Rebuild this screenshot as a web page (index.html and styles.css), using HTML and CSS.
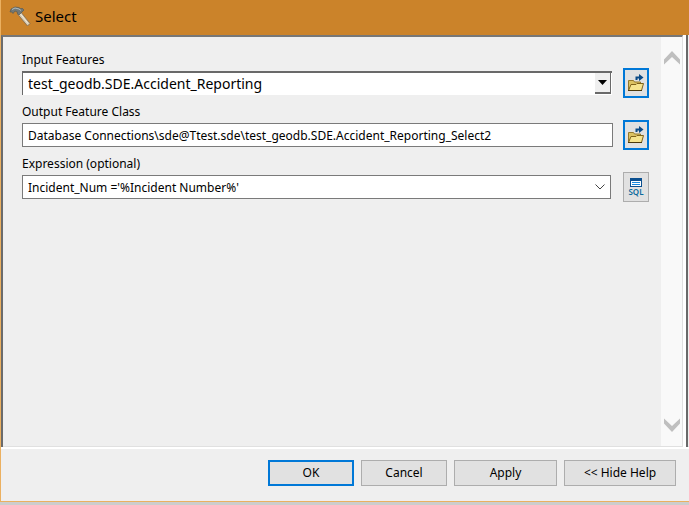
FILE: index.html
```html
<!DOCTYPE html>
<html lang="en">
<head>
<meta charset="utf-8">
<title>Select</title>
<link rel="stylesheet" href="styles.css">
</head>
<body>
<svg class="defs" aria-hidden="true">
  <symbol id="folder" viewBox="0 0 18 18">
    <path d="M1.500 16V6.500h5l1 1.500h6v3" fill="#dcc262" stroke="#94782c"/>
    <path d="M1.500 16.500L4 10.500h5l1-1h6.500l-2 7z" fill="#f6e48e" stroke="#80621a"/>
    <path d="M1 16.500h14" stroke="#4d3a0c"/>
    <path d="M9.500 6V3.500H13" fill="none" stroke="#0b4a86" stroke-width="2"/>
    <path d="M12 0l4.500 3.500L12 7z" fill="#0b4a86"/>
  </symbol>
  <symbol id="scroll-chevron" viewBox="0 0 16 14">
    <path d="M0 8.500L8 0l8 8.500v5L8 6l-8 7.500z" fill="#bfbfbf"/>
  </symbol>
</svg>
<main class="window">
  <header class="titlebar">
    <svg class="hammer" viewBox="0 0 22 22" aria-hidden="true">
      <path d="M8.500 9l3-2.500L21 18.500 18.500 21z" fill="#d6cab2" stroke="#80684c" stroke-width=".8"/>
      <path d="M11.500 9l7.500 9.500" stroke="#f4ecdc"/>
      <path d="M1 7l1-3 4-2 4 .5L12 4l1-1 2 2-5 5-2-2 .5-1L6 6 4 8.500 3 7z" fill="#727876" stroke="#585c58" stroke-width=".7"/>
      <path d="M3 4.500L6 3l4 1 2 1.500" fill="none" stroke="#b0bcc0"/>
    </svg>
    <h1>Select</h1>
  </header>
  <div class="workspace">
    <form class="panel" id="tool">
      <div class="field">
        <label for="features">Input Features</label>
        <div class="control classic">
          <select id="features"><option>test_geodb.SDE.Accident_Reporting</option></select>
          <span class="drop" aria-hidden="true"><svg viewBox="0 0 9 5"><path d="M0 0h9L4.500 5z"/></svg></span>
        </div>
        <button class="tool browse" type="button" aria-label="Browse input"><svg><use href="#folder"/></svg></button>
      </div>
      <div class="field">
        <label for="output">Output Feature Class</label>
        <div class="control output"><input id="output" type="text" value="Database Connections\sde@Ttest.sde\test_geodb.SDE.Accident_Reporting_Select2"></div>
        <button class="tool browse" type="button" aria-label="Browse output"><svg><use href="#folder"/></svg></button>
      </div>
      <div class="field">
        <label for="expression">Expression (optional)</label>
        <div class="control">
          <input id="expression" type="text" value="Incident_Num ='%Incident Number%'">
          <button class="chevron" type="button" aria-label="Show expressions"><svg viewBox="0 0 10 6"><path d="M.5.5L5 5 9.500.5" fill="none" stroke="#444"/></svg></button>
        </div>
        <button class="tool" type="button" aria-label="Query builder">
          <span class="sql"><svg viewBox="0 0 12 9"><path d="M0 0h12v9H0z" fill="#0b4f8f"/><path d="M1 3h10v5H1z" fill="#fff"/><path d="M2 4.500h8M2 6.500h8" stroke="#1689e0"/></svg><span>SQL</span></span>
        </button>
      </div>
    </form>
    <div class="scrollbar">
      <button type="button" aria-label="Scroll up"><svg><use href="#scroll-chevron"/></svg></button>
      <button type="button" class="down" aria-label="Scroll down"><svg><use href="#scroll-chevron"/></svg></button>
    </div>
    <aside class="help"></aside>
  </div>
  <footer class="actions">
    <button class="primary" form="tool" type="button">OK</button>
    <button type="button">Cancel</button>
    <button class="apply" type="button">Apply</button>
    <button class="hide" type="button">&lt;&lt; Hide Help</button>
  </footer>
</main>
</body>
</html>
```
FILE: styles.css
```css
* { box-sizing: border-box; }
body {
  margin: 0;
  background: #cdcdcd;
  color: #000;
  font: 12px/16px "Noto Sans", sans-serif;
}
button, input, select { font: inherit; color: inherit; margin: 0; }
button { padding: 0; background: #e1e1e1; border: 1px solid #adadad; }
svg { display: block; }
.defs { display: none; }
.window {
  display: flex;
  flex-direction: column;
  height: calc(100vh - 3px);
  background: #efefef;
  border: solid #ebb060;
  border-width: 0 0 1px 1px;
}
.titlebar {
  display: flex;
  align-items: center;
  gap: 4px;
  height: 35px;
  padding: 0 8px 3px;
  background: #cb832a;
}
.hammer { width: 22px; height: 22px; }
.titlebar h1 { margin: 0; font-size: 15px; line-height: 20px; font-weight: 400; }
.workspace {
  flex: 1;
  display: flex;
  border-bottom: 2px solid #fff;
  box-shadow: inset 0 -1px #e0e0e0;
}
.panel {
  flex: 1;
  min-width: 0;
  padding: 15px 12px 0 19px;
  border: solid #6b6b6b;
  border-width: 2px 0 0 2px;
  border-top-color: #777;
}
.field {
  display: grid;
  grid-template-columns: 1fr 26px;
  column-gap: 10px;
  margin-bottom: 6px;
}
.field label { grid-column: 1 / -1; justify-self: start; }
.control {
  position: relative;
  align-self: center;
  height: 24px;
  margin-right: 2px;
  background: #fff;
  border: 1px solid #7a7a7a;
}
.control.output { margin-right: 0; }
.control input, .control select {
  display: block;
  width: 100%;
  height: 100%;
  padding: 0 20px 0 5px;
  border: 0;
  background: none;
  appearance: none;
  outline: 0;
}
.control.output input { padding-right: 5px; }
.control.classic {
  border: solid #696969;
  border-width: 2px 0 0 1px;
  margin-right: 1px;
}
.classic select { font-size: 14px; line-height: 22px; }
.drop {
  position: absolute;
  top: 0;
  right: 1px;
  bottom: 1px;
  width: 16px;
  display: grid;
  place-items: center;
  background: #efefef;
  border: solid #696969;
  border-width: 0 1px 2px 0;
  pointer-events: none;
}
.drop svg { width: 9px; height: 5px; }
.chevron {
  position: absolute;
  top: 0;
  right: 0;
  width: 20px;
  height: 22px;
  display: grid;
  place-items: center;
  background: none;
  border: 0;
}
.chevron svg { width: 10px; height: 6px; }
.tool { display: grid; place-items: center; height: 30px; }
.browse { border: 2px solid #0078d7; }
.browse svg { width: 18px; height: 18px; }
.sql { display: grid; justify-items: center; color: #0a6a9c; font-size: 8px; line-height: 9px; font-weight: 600; }
.sql svg { width: 12px; height: 9px; }
.scrollbar {
  width: 22px;
  display: flex;
  flex-direction: column;
  justify-content: space-between;
  padding: 14px 0;
  background: #f9f9f9;
  border-top: 2px solid #777;
  border-right: 1px solid #e0e0e0;
  margin-bottom: 1px;
}
.scrollbar button { display: grid; justify-items: center; background: none; border: 0; }
.scrollbar svg { width: 16px; height: 14px; }
.scrollbar .down svg { transform: rotate(180deg); }
.help {
  width: 6px;
  border-left: 3px solid #fff;
  box-shadow: inset 2px 0 #696969;
}
.actions { display: flex; justify-content: flex-end; gap: 7px; padding: 11px 13px 15px; }
.actions button { width: 86px; height: 26px; }
.actions .primary { border: 2px solid #0078d7; }
.actions .apply { width: 103px; }
.actions .hide { width: 112px; }
```
